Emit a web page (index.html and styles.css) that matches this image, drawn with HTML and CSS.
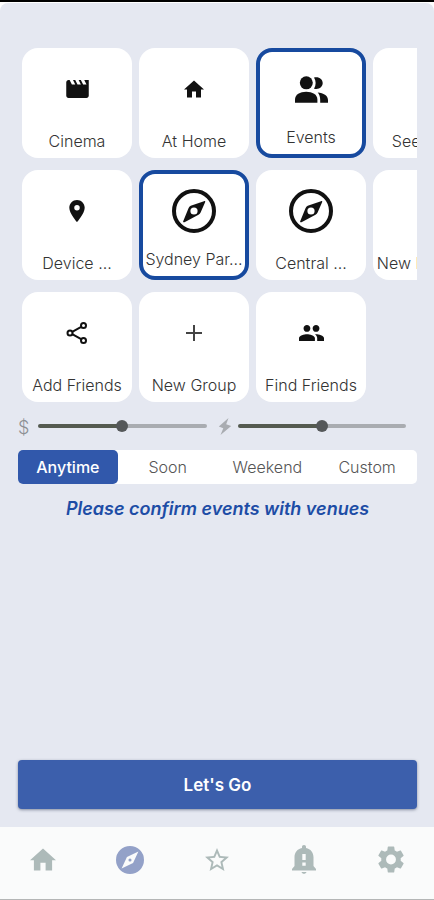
FILE: index.html
```html
<!DOCTYPE html>
<html lang="en">
<head>
<meta charset="utf-8">
<meta name="viewport" content="width=device-width, initial-scale=1">
<title>Plan an outing</title>
<link rel="stylesheet" href="styles.css">
</head>
<body>
<svg class="defs" aria-hidden="true">
  <symbol id="compass" viewBox="0 0 44 44">
    <circle cx="22" cy="22" r="20" fill="none" stroke="currentColor" stroke-width="4"/>
    <path fill="currentColor" fill-rule="evenodd" d="M32 12.200c1-.5 1.500.1 1.100 1.100L28.600 23.500c-.4.900-1.100 1.700-2.100 2.300L12.500 33.200c-1.100.4-1.700-.2-1.200-1.200l5.200-12.800c.4-1 1.200-1.900 2.200-2.400zM22 18.400a3.600 3.600 0 1 0 0 7.200 3.600 3.600 0 0 0 0-7.200z"/>
  </symbol>
  <symbol id="home" viewBox="2 3 20 17">
    <path fill="currentColor" d="M10 20v-6h4v6h5v-8h3L12 3 2 12h3v8z"/>
  </symbol>
</svg>
<main class="screen">
  <div class="content">
    <div class="rows">
      <div class="row">
        <button class="card"><span class="icon"><svg width="23" height="18" viewBox="2 4 20 16"><path fill="currentColor" d="M18 4l2 4h-3l-2-4h-2l2 4h-3l-2-4H8l2 4H7L5 4H4c-1.100 0-2 .9-2 2v12c0 1.100.9 2 2 2h16c1.100 0 2-.9 2-2V4z"/></svg></span><span class="label">Cinema</span></button>
        <button class="card"><span class="icon"><svg width="20" height="18"><use href="#home"/></svg></span><span class="label">At Home</span></button>
        <button class="card selected" aria-pressed="true"><span class="icon"><svg width="33" height="27" viewBox="0 0 33 27"><g fill="currentColor"><circle cx="11.300" cy="6.800" r="6.500"/><path d="M0 26.700v-3C0 18.500 5 15.800 11.200 15.800s11.200 2.700 11.200 7.900v3z"/><path d="M19 1.500c4.800-1.300 8.700 1.600 8.700 5.600s-3.900 7-8.700 5.600c2.200-3.300 2.200-7.900 0-11.200z"/><path d="M22.700 16.500C28.500 17 33 19.700 33 24v2.700h-7.800V24c0-3.200-.8-5.700-2.500-7.500z"/></g></svg></span><span class="label">Events</span></button>
        <button class="card"><span class="icon"></span><span class="label">See Films</span></button>
      </div>
      <div class="row">
        <button class="card"><span class="icon"><svg width="16" height="22" viewBox="5 2 14 20"><path fill="currentColor" d="M12 2C8.130 2 5 5.130 5 9c0 5.250 7 13 7 13s7-7.750 7-13c0-3.870-3.130-7-7-7zm0 9.500a2.500 2.500 0 1 1 0-5 2.500 2.500 0 0 1 0 5z"/></svg></span><span class="label">Device ...</span></button>
        <button class="card selected" aria-pressed="true"><span class="icon"><svg width="44" height="44"><use href="#compass"/></svg></span><span class="label">Sydney Par...</span></button>
        <button class="card"><span class="icon"><svg width="44" height="44"><use href="#compass"/></svg></span><span class="label">Central ...</span></button>
        <button class="card"><span class="icon"></span><span class="label">New Location</span></button>
      </div>
      <div class="row">
        <button class="card"><span class="icon"><svg width="22" height="22" viewBox="0 0 22 22"><g fill="none" stroke="currentColor" stroke-width="2"><circle cx="4" cy="11" r="2.500"/><circle cx="17.500" cy="3.500" r="2.500"/><circle cx="17.500" cy="18.500" r="2.500"/><path d="M6.200 9.800 15.200 4.800M6.200 12.200l9 5"/></g></svg></span><span class="label">Add Friends</span></button>
        <button class="card"><span class="icon"><svg width="16" height="16" viewBox="0 0 16 16"><path fill="none" stroke="#444" stroke-width="2" d="M8 0v16M0 8h16"/></svg></span><span class="label">New Group</span></button>
        <button class="card"><span class="icon"><svg width="25" height="16" viewBox="1 5 22 14"><path fill="currentColor" d="M16 11c1.660 0 2.990-1.340 2.990-3S17.660 5 16 5s-3 1.340-3 3 1.340 3 3 3zm-8 0c1.660 0 2.990-1.340 2.990-3S9.660 5 8 5 5 6.340 5 8s1.340 3 3 3zm0 2c-2.330 0-7 1.170-7 3.500V19h14v-2.500c0-2.330-4.670-3.500-7-3.500zm8 0c-.29 0-.62.02-.97.050 1.160.84 1.970 1.970 1.970 3.450V19h6v-2.500c0-2.330-4.670-3.500-7-3.500z"/></svg></span><span class="label">Find Friends</span></button>
      </div>
    </div>
    <div class="sliders">
      <label class="slider"><span class="dollar">$</span><input type="range" aria-label="Budget" value="50"></label>
      <label class="slider"><svg class="bolt" width="14" height="17" viewBox="0 0 14 17"><path fill="#a9acb1" d="M10.500 0 .8 8.500l4.500 1.700L2.500 17 13.200 8l-5-1.800z"/></svg><input type="range" aria-label="Energy" value="50"></label>
    </div>
    <div class="segments">
      <button class="segment active" aria-pressed="true">Anytime</button>
      <button class="segment">Soon</button>
      <button class="segment">Weekend</button>
      <button class="segment">Custom</button>
    </div>
    <p class="notice">Please confirm events with venues</p>
    <button class="go">Let's Go</button>
  </div>
  <nav class="tabs">
    <a href="#home-tab" aria-label="Home"><svg width="26" height="23"><use href="#home"/></svg></a>
    <a href="#explore" class="current" aria-label="Explore"><svg width="28" height="28" viewBox="2 2 20 20"><path fill="currentColor" d="M12 10.900a1.100 1.100 0 1 0 0 2.200 1.100 1.100 0 0 0 0-2.200zM12 2a10 10 0 1 0 0 20 10 10 0 0 0 0-20zm2.190 12.190L6 18l3.810-8.190L18 6z"/></svg></a>
    <a href="#saved" aria-label="Saved"><svg width="24" height="23" viewBox="2 2 20 19"><path fill="currentColor" d="M22 9.240l-7.190-.62L12 2 9.190 8.630 2 9.240l5.460 4.730L5.820 21 12 17.270 18.180 21l-1.630-7.030zM12 15.400l-3.760 2.270 1-4.280-3.320-2.880 4.380-.38L12 6.100l1.710 4.040 4.380.38-3.320 2.880 1 4.280z"/></svg></a>
    <a href="#alerts" aria-label="Alerts"><svg width="24" height="29" viewBox="0 0 24 29"><path fill="currentColor" fill-rule="evenodd" d="M12 0c1.300 0 2 .9 2 2v1c4.700.8 7.500 4.600 7.500 9.300V21l2.500 3v1.500H0V24l2.500-3v-8.700C2.500 7.600 5.300 3.800 10 3V2c0-1.100.7-2 2-2zm-1.700 9v6h3.400V9zm0 8.500v3.300h3.400v-3.300zM9.500 27h5c-.3 1.200-1.300 1.800-2.500 1.800s-2.200-.6-2.500-1.800z"/></svg></a>
    <a href="#settings" aria-label="Settings"><svg width="26" height="27" viewBox="2 2 20 20"><path fill="currentColor" d="M19.430 12.980c.04-.32.070-.64.070-.98s-.03-.66-.07-.98l2.110-1.650c.19-.15.24-.42.12-.64l-2-3.460c-.12-.22-.39-.3-.61-.22l-2.490 1c-.52-.4-1.080-.73-1.690-.98l-.38-2.650A.49.49 0 0 0 14 2h-4c-.25 0-.46.18-.49.420l-.38 2.650c-.61.250-1.170.59-1.690.98l-2.490-1c-.23-.09-.49 0-.61.220l-2 3.460c-.13.220-.07.490.12.640l2.110 1.650c-.04.320-.07.650-.07.980s.03.660.07.980l-2.110 1.650c-.19.150-.24.420-.12.640l2 3.460c.12.220.39.300.61.220l2.490-1c.52.400 1.080.730 1.690.980l.38 2.650c.03.240.240.420.490.420h4c.25 0 .46-.18.49-.42l.38-2.650c.61-.25 1.170-.59 1.690-.98l2.490 1c.23.090.49 0 .61-.22l2-3.460c.12-.22.070-.49-.12-.64zM12 15.800a3.800 3.800 0 1 1 0-7.600 3.800 3.800 0 0 1 0 7.600z"/></svg></a>
  </nav>
</main>
</body>
</html>
```
FILE: styles.css
```css
* {
  box-sizing: border-box;
}

body {
  margin: 0;
  background: #fff;
  color: #111;
  font-family: Inter, "Open Sans", sans-serif;
  font-size: 16px;
}

button {
  margin: 0;
  padding: 0;
  border: 0;
  background: none;
  color: inherit;
  font: inherit;
}

.defs {
  position: absolute;
  width: 0;
  height: 0;
}

.screen {
  display: flex;
  flex-direction: column;
  min-height: 100vh;
  border-top: 2px solid #000;
}

.content {
  display: flex;
  flex: 1;
  flex-direction: column;
  margin-top: 1px;
  padding: 45px 17px 18px 18px;
  border-radius: 8px 8px 0 0;
  background: #e5e8f1;
}

.rows {
  display: flex;
  flex-direction: column;
  gap: 12px;
}

.row {
  display: flex;
  gap: 7px;
  padding-left: 4px;
  overflow: hidden;
}

.card {
  display: flex;
  flex: none;
  flex-direction: column;
  align-items: center;
  width: 110px;
  height: 110px;
  border-radius: 16px;
  background: #fff;
}

.icon {
  display: flex;
  align-items: center;
  justify-content: center;
  height: 82px;
}

.label {
  color: #333;
  font-size: 16px;
  font-weight: 300;
  line-height: 22px;
  white-space: nowrap;
}

.selected {
  border: 4px solid #174a9f;
}

.selected .icon {
  height: 74px;
}

.sliders {
  display: grid;
  grid-template-columns: 1fr 1fr;
  margin-top: 12px;
  padding-right: 11px;
  column-gap: 11px;
}

.slider {
  display: flex;
  align-items: center;
  height: 24px;
}

.dollar {
  width: 20px;
  padding-top: 4px;
  color: #8d9094;
  font-size: 18px;
  font-weight: 300;
  line-height: 20px;
}

.bolt {
  flex: none;
  margin-right: 6px;
}

input[type="range"] {
  flex: 1;
  min-width: 0;
  height: 24px;
  margin: 0;
  appearance: none;
  background: none;
}

input[type="range"]::-webkit-slider-runnable-track {
  height: 4px;
  border-radius: 2px;
  background: linear-gradient(to right, #545a50 50%, #a9acb1 50%);
}

input[type="range"]::-webkit-slider-thumb {
  width: 12px;
  height: 12px;
  margin-top: -4px;
  appearance: none;
  border-radius: 50%;
  background: #55585a;
}

.segments {
  display: grid;
  grid-template-columns: repeat(4, 1fr);
  margin-top: 12px;
  border-radius: 5px;
  background: #fff;
}

.segment {
  height: 34px;
  border-radius: 5px;
  color: #555;
  font-weight: 300;
}

.segment.active {
  background: #3158ab;
  color: #fff;
  font-weight: 500;
}

.notice {
  margin: 12px 0 0;
  color: #1d4da6;
  font-size: 18px;
  font-style: italic;
  font-weight: 600;
  line-height: 26px;
  text-align: center;
}

.go {
  height: 49px;
  margin-top: auto;
  border-radius: 4px;
  background: #3c5fac;
  box-shadow: 0 1px 3px rgba(40, 50, 80, 0.5);
  color: #fff;
  font-size: 17px;
  font-weight: 600;
}

.tabs {
  display: grid;
  grid-template-columns: repeat(5, 1fr);
  height: 73px;
  padding-bottom: 7px;
  border-bottom: 1px solid #b4b6b6;
  background: #fafbfb;
}

.tabs a {
  display: flex;
  align-items: center;
  justify-content: center;
  color: #adbab9;
}

.tabs .current {
  color: #93a1c8;
}
```
